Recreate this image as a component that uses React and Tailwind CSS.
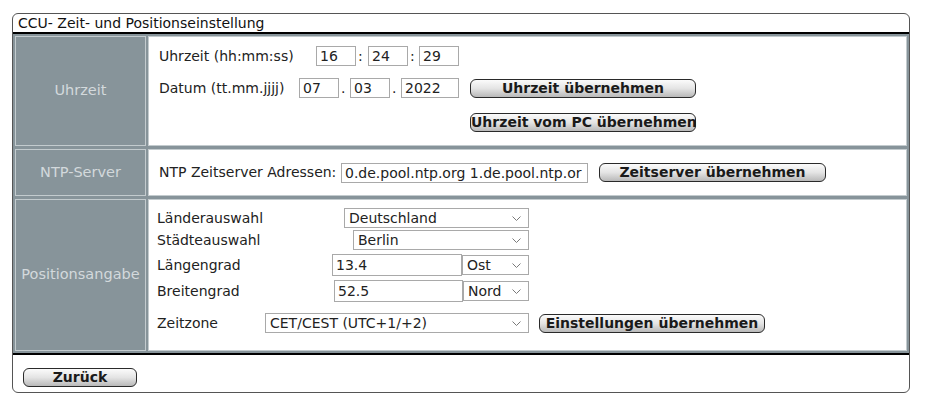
import React from 'react';

function Box({ value, className = '' }) {
    return (
        <div className={`h-[20px] border border-[#a9a9a9] bg-white pl-[3px] leading-[18px] whitespace-nowrap overflow-hidden ${className}`}>
            {value}
        </div>
    );
}

function Select({ value, className = '' }) {
    return (
        <div className={`relative h-[20px] border border-[#a9a9a9] bg-white pl-[4px] leading-[18px] whitespace-nowrap ${className}`}>
            {value}
            <svg className="absolute right-[7px] top-[7px]" width="9" height="5" viewBox="0 0 9 5">
                <path d="M0.5 0.5L4.5 4.5L8.5 0.5" fill="none" stroke="#7a7a7a" strokeWidth="1" />
            </svg>
        </div>
    );
}

function Btn({ children, className = '' }) {
    return (
        <button
            type="button"
            className={`h-[19px] rounded-[6px] border border-[#2a2a2a] bg-gradient-to-b from-[#fbfbfb] via-[#e4e4e4] to-[#b9b9b9] text-[14px] font-bold leading-[17px] text-[#1a1a1a] whitespace-nowrap ${className}`}
        >
            {children}
        </button>
    );
}

function LabelCell({ children }) {
    return (
        <div className="flex items-center justify-center border border-[#c3cbce] bg-[#87949a] text-[14.5px] text-[#d3d9dc]">
            {children}
        </div>
    );
}

export default function App() {
    return (
        <div className="min-h-[405px] bg-white pt-[13px] pl-[12px] font-['DejaVu_Sans',sans-serif] text-[14px] text-[#222]">
            <div className="flex h-[380px] w-[898px] flex-col overflow-hidden rounded-[6px] border border-[#555]">
                <div className="h-[18px] pl-[5px] text-[14px] leading-[18px] text-[#111]">CCU- Zeit- und Positionseinstellung</div>
                <div className="h-[2px] bg-black" />
                <div className="grid grid-cols-[131px_1fr] grid-rows-[110px_47px_152px] gap-x-[2px] gap-y-[3px] bg-[#87949a] p-[2px]">
                    <LabelCell>Uhrzeit</LabelCell>
                    <div className="flex flex-col border border-[#c3cbce] bg-white pl-[10px] pt-[9px]">
                        <div className="flex h-[20px] items-center">
                            <span className="w-[157px]">Uhrzeit (hh:mm:ss)</span>
                            <Box value="16" className="w-[40px]" />
                            <span className="w-[12px] pl-[2px]">:</span>
                            <Box value="24" className="w-[40px]" />
                            <span className="w-[11px] pl-[2px]">:</span>
                            <Box value="29" className="w-[40px]" />
                        </div>
                        <div className="mt-[12px] flex h-[20px] items-center">
                            <span className="w-[140px]">Datum (tt.mm.jjjj)</span>
                            <Box value="07" className="w-[40px]" />
                            <span className="w-[11px] pl-[2px]">.</span>
                            <Box value="03" className="w-[40px]" />
                            <span className="w-[11px] pl-[2px]">.</span>
                            <Box value="2022" className="w-[58px]" />
                            <Btn className="ml-[11px] w-[226px]">Uhrzeit übernehmen</Btn>
                        </div>
                        <div className="mt-[15px] flex">
                            <Btn className="ml-[311px] w-[226px]">Uhrzeit vom PC übernehmen</Btn>
                        </div>
                    </div>

                    <LabelCell>NTP-Server</LabelCell>
                    <div className="flex items-center border border-[#c3cbce] bg-white pl-[10px]">
                        <span className="w-[182px]">NTP Zeitserver Adressen:</span>
                        <Box value="0.de.pool.ntp.org 1.de.pool.ntp.or" className="w-[247px]" />
                        <Btn className="ml-[11px] w-[227px]">Zeitserver übernehmen</Btn>
                    </div>

                    <LabelCell>Positionsangabe</LabelCell>
                    <div className="flex flex-col border border-[#c3cbce] bg-white pl-[8px] pt-[8px]">
                        <div className="flex h-[20px] w-[372px] items-center">
                            <span>Länderauswahl</span>
                            <Select value="Deutschland" className="ml-auto w-[185px]" />
                        </div>
                        <div className="mt-[2px] flex h-[20px] w-[372px] items-center">
                            <span>Städteauswahl</span>
                            <Select value="Berlin" className="ml-auto w-[176px]" />
                        </div>
                        <div className="mt-[4px] flex h-[22px] w-[372px] items-center">
                            <span>Längengrad</span>
                            <Box value="13.4" className="ml-auto h-[22px] w-[130px] leading-[20px]" />
                            <Select value="Ost" className="w-[67px]" />
                        </div>
                        <div className="mt-[4px] flex h-[22px] w-[372px] items-center">
                            <span>Breitengrad</span>
                            <Box value="52.5" className="ml-auto h-[22px] w-[129px] leading-[20px]" />
                            <Select value="Nord" className="w-[66px]" />
                        </div>
                        <div className="mt-[11px] flex h-[20px] items-center">
                            <span className="w-[108px]">Zeitzone</span>
                            <Select value="CET/CEST (UTC+1/+2)" className="w-[264px]" />
                            <Btn className="ml-[10px] w-[226px]">Einstellungen übernehmen</Btn>
                        </div>
                    </div>
                </div>
                <div className="h-[2px] bg-black" />
                <div className="flex-1 pl-[10px] pt-[12px]">
                    <Btn className="w-[114px]">Zurück</Btn>
                </div>
            </div>
        </div>
    );
}
